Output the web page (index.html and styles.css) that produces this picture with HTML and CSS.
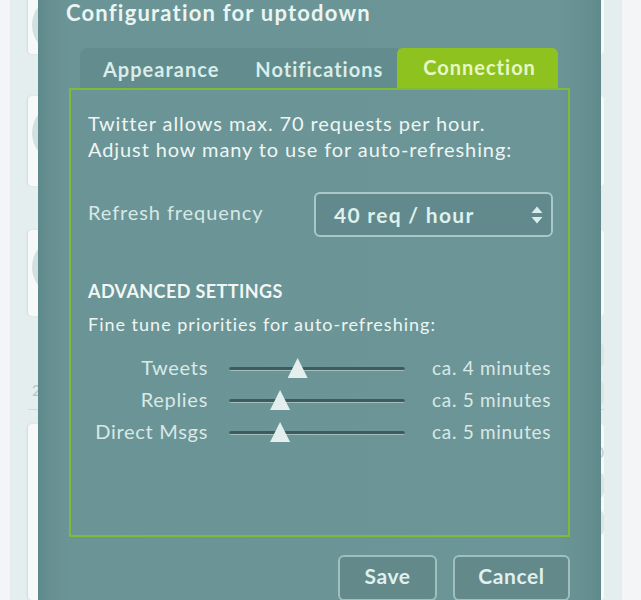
FILE: index.html
```html
<!DOCTYPE html>
<html lang="en">
<head>
<meta charset="UTF-8" />
<meta name="viewport" content="width=device-width, initial-scale=1" />
<title>uptodown - settings</title>
<link rel="stylesheet" href="styles.css">
</head>
<body>

  <!-- timeline behind the modal -->
  <div class="page">
    <div class="timeline">
      <div class="tweet t1"><span class="avatar"></span><span class="actions"></span></div>
      <div class="tweet t2"><span class="avatar"></span></div>
      <div class="tweet t3"><span class="avatar"></span></div>
      <div class="tweet-foot">
        <span class="stamp">20</span>
        <span class="tools"><i class="tool"></i><i class="tool"></i></span>
      </div>
      <div class="tweet t4">
        <span class="count">40</span>
        <span class="tools"><i class="tool"></i><i class="tool"></i></span>
      </div>
    </div>
  </div>

  <!-- settings dialog -->
  <div class="dialog">
    <h2 class="dialog-title">Configuration for uptodown</h2>

    <ul class="tabs">
      <li>Appearance</li>
      <li>Notifications</li>
      <li class="active">Connection</li>
    </ul>

    <section class="panel">
      <p class="intro">Twitter allows max. 70 requests per hour.<br>Adjust how many to use for auto-refreshing:</p>

      <div class="freq-row">
        <label>Refresh frequency</label>
        <div class="select">
          <span>40 req / hour</span>
          <svg class="arrows" width="14" height="22" viewBox="0 0 14 22">
            <path d="M1.5 9 L7 2.5 L12.5 9 Z" fill="#d8eeec"/>
            <path d="M1.5 13 L7 19.5 L12.5 13 Z" fill="#d8eeec"/>
          </svg>
        </div>
      </div>

      <h3 class="adv-title">ADVANCED SETTINGS</h3>
      <p class="adv-text">Fine tune priorities for auto-refreshing:</p>

      <div class="sliders">
        <div class="slider-row">
          <span class="slider-label">Tweets</span>
          <div class="track"><span class="thumb" style="left: 39%"></span></div>
          <span class="slider-value">ca. 4 minutes</span>
        </div>
        <div class="slider-row">
          <span class="slider-label">Replies</span>
          <div class="track"><span class="thumb" style="left: 29%"></span></div>
          <span class="slider-value">ca. 5 minutes</span>
        </div>
        <div class="slider-row">
          <span class="slider-label">Direct Msgs</span>
          <div class="track"><span class="thumb" style="left: 29%"></span></div>
          <span class="slider-value">ca. 5 minutes</span>
        </div>
      </div>
    </section>

    <div class="buttons">
      <button class="btn save">Save</button>
      <button class="btn cancel">Cancel</button>
    </div>
  </div>

</body>
</html>
```

FILE: styles.css
```css
/* Reset */
* {
  margin: 0; padding: 0; box-sizing: border-box;
}

body {
  font-family: Lato, "Open Sans", sans-serif;
  background: #f4f5f6;
  width: 641px;
  height: 600px;
  overflow: hidden;
  position: relative;
}

/* page behind the modal */
.page {
  display: flex;
  padding-left: 10px;
  height: 600px;
}

.timeline {
  width: 612px;
  background: #e4eeee;
  display: flex;
  flex-direction: column;
  gap: 14px;
  padding: 0 18px 0 18px;
}

.tweet {
  position: relative;
  background: #f7f9f9;
  border-radius: 4px;
  box-shadow: -1px 0 2px rgba(0,0,0,0.08);
}

.tweet.t1 { height: 58px; margin-top: -4px; }
.tweet.t2 { height: 90px; margin-top: 28px; }
.tweet.t3 { height: 86px; margin-top: 30px; }
.tweet.t4 { height: 110px; flex: 1; }

.tweet .avatar {
  display: block;
  width: 40px;
  height: 50px;
  margin: 12px 0 0 4px;
  border-radius: 50%;
  background: #d3e0e2;
}

.tweet.t1 .avatar { margin-top: 4px; }

.tweet-foot {
  height: 60px;
  margin-top: 20px;
  border-bottom: 1px solid #cfdada;
  position: relative;
}

.stamp {
  position: absolute;
  left: 4px;
  bottom: 10px;
  font-size: 15px;
  color: #b9c4c4;
}

.count {
  position: absolute;
  right: 0;
  top: 18px;
  font-size: 16px;
  color: #c3cccc;
}

.tools {
  position: absolute;
  right: 0;
  top: 0;
  display: flex;
  flex-direction: column;
  gap: 12px;
}

.tweet-foot .tools { top: -8px; }
.tweet.t4 .tools { top: 48px; }

.tool {
  display: block;
  width: 22px;
  height: 26px;
  border-radius: 6px;
  background: #dde4e4;
}

/* dialog */
.dialog {
  position: absolute;
  left: 38px;
  top: 0;
  width: 563px;
  height: 600px;
  background: linear-gradient(to right, #5e8a8c 0, #678f91 12px, #6b9496 30px, #6c9597 520px, #648e90 552px, #5f898b 563px);
  color: #e8f3f1;
  padding: 2px 0 0 31px;
}

.dialog-title {
  font-size: 22px;
  font-weight: 700;
  line-height: 22px;
  margin-left: -3px;
  color: #eaf5f2;
  letter-spacing: 1.2px;
}

.tabs {
  list-style: none;
  display: flex;
  align-items: flex-end;
  margin: 24px 0 0 11px;
  width: 318px;
  height: 40px;
  background: #628c8e;
  border-radius: 8px 0 0 0;
}

.tabs li {
  flex-shrink: 0;
  font-size: 20px;
  font-weight: 700;
  line-height: 38px;
  letter-spacing: 1px;
  padding: 0 18px 0 23px;
  color: #d9ede9;
}

.tabs li + li {
  padding: 0 14px 0 18px;
}

.tabs li.active {
  padding: 0 22px 0 26px;
  height: 40px;
  background: #8ec31f;
  color: #e8f7c7;
  border-radius: 6px 6px 0 0;
}

.panel {
  width: 501px;
  height: 449px;
  border: 2px solid #7fbb3a;
  padding: 20px 10px 0 17px;
}

.intro {
  font-size: 20px;
  line-height: 26px;
  letter-spacing: 0.9px;
  color: #eef6f3;
}

.freq-row {
  display: flex;
  align-items: center;
  margin-top: 30px;
  padding-right: 5px;
}

.freq-row label {
  font-size: 20px;
  letter-spacing: 0.9px;
  color: #d6e8e5;
  flex: 1;
  margin-top: -6px;
}

.select {
  width: 239px;
  height: 45px;
  border: 2px solid #a8c9c8;
  border-radius: 6px;
  background: #62898b;
  display: flex;
  align-items: center;
  justify-content: space-between;
  padding: 0 7px 0 18px;
  font-size: 21px;
  font-weight: 700;
  letter-spacing: 1.3px;
  color: #ddf1ee;
}

.adv-title {
  font-size: 18px;
  font-weight: 700;
  margin-top: 43px;
  color: #f0f7f4;
  letter-spacing: 0.4px;
}

.adv-text {
  font-size: 18px;
  margin-top: 11px;
  letter-spacing: 1px;
  color: #eef6f3;
}

.sliders {
  margin-top: 16px;
  display: flex;
  flex-direction: column;
}

.slider-row {
  display: flex;
  align-items: center;
  height: 32px;
  white-space: nowrap;
}

.slider-label {
  flex-shrink: 0;
  width: 120px;
  text-align: right;
  font-size: 20px;
  letter-spacing: 0.7px;
  color: #d8e9e6;
}

.track {
  flex-shrink: 0;
  position: relative;
  width: 176px;
  height: 4px;
  margin: 4px 27px 0 21px;
  border-radius: 3px;
  background: #3e5c5d;
  border-bottom: 1px solid #9fc0bf;
}

.thumb {
  position: absolute;
  top: -9px;
  width: 20px;
  height: 20px;
  margin-left: -10px;
  background: #e4eeec;
  clip-path: polygon(50% 0, 100% 100%, 0 100%);
}

.slider-value {
  font-size: 19px;
  letter-spacing: 0.7px;
  color: #d8e9e6;
}

/* bottom buttons */
.buttons {
  display: flex;
  justify-content: flex-end;
  gap: 16px;
  width: 501px;
  margin-top: 18px;
}

.btn {
  font-family: inherit;
  height: 46px;
  padding-bottom: 6px;
  font-size: 21px;
  font-weight: 700;
  letter-spacing: 0.6px;
  color: #dff1ee;
  background: #63898b;
  border: 2px solid #9ec1c0;
  border-radius: 6px;
}

.btn.save { width: 99px; }
.btn.cancel { width: 117px; }
```
